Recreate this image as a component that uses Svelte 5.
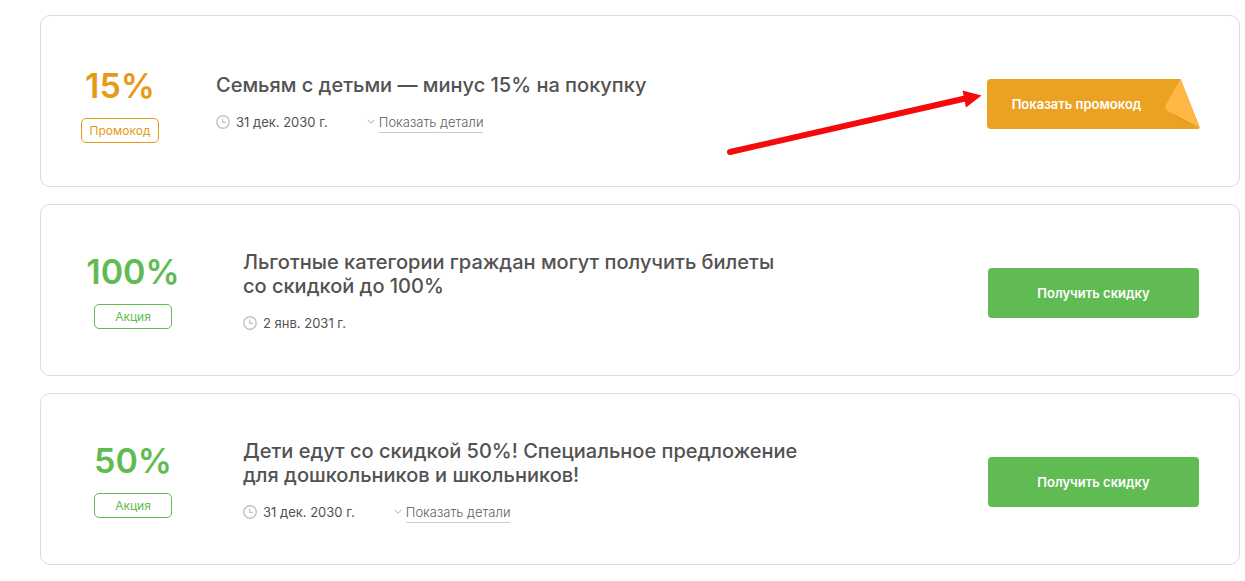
<script lang="ts">
  interface Offer {
    discount: string
    kind: 'promo' | 'action'
    title: string[]
    date: string
    details: boolean
  }

  const offers: Offer[] = [
    {
      discount: '15%',
      kind: 'promo',
      title: ['Семьям с детьми — минус 15% на покупку'],
      date: '31 дек. 2030 г.',
      details: true,
    },
    {
      discount: '100%',
      kind: 'action',
      title: ['Льготные категории граждан могут получить билеты', 'со скидкой до 100%'],
      date: '2 янв. 2031 г.',
      details: false,
    },
    {
      discount: '50%',
      kind: 'action',
      title: ['Дети едут со скидкой 50%! Специальное предложение', 'для дошкольников и школьников!'],
      date: '31 дек. 2030 г.',
      details: true,
    },
  ]
</script>

<main class="offers">
  {#each offers as offer (offer.discount)}
    <article class="card {offer.kind}">
      <div class="badge">
        <span class="discount">{offer.discount}</span>
        <span class="tag">{offer.kind === 'promo' ? 'Промокод' : 'Акция'}</span>
      </div>

      <div class="info">
        <h2>
          {#each offer.title as line}
            <span>{line}</span>
          {/each}
        </h2>
        <div class="meta">
          <span class="date">
            <svg width="14" height="14" viewBox="0 0 14 14" fill="none" stroke="#c2c2c2" aria-hidden="true">
              <circle cx="7" cy="7" r="6.2" stroke-width="1.4" />
              <path d="M6.6 3.6V7.4H10" stroke-width="1.2" />
            </svg>
            {offer.date}
          </span>
          {#if offer.details}
            <button class="details">
              <svg width="8" height="6" viewBox="0 0 8 6" fill="none" stroke="#aaa" aria-hidden="true">
                <path d="M0.6 0.8L4 4.3L7.4 0.8" />
              </svg>
              <span>Показать детали</span>
            </button>
          {/if}
        </div>
      </div>

      {#if offer.kind === 'promo'}
        <button class="cta">
          <svg class="fold" width="36" height="50" viewBox="0 0 36 50" aria-hidden="true">
            <path d="M0 0H16.5L35.6 48Q36 50 34 50H0Z" fill="#eba122" />
            <path d="M1.5 28L17 41L35.5 49L30 42Z" fill="#df9719" />
            <path d="M16.5 0L35.8 49L4 32Q0 29.5 1.8 26Z" fill="#ffb845" />
          </svg>
          <span>Показать промокод</span>
        </button>
        <svg class="arrow" width="258" height="68" viewBox="0 0 258 68" aria-hidden="true">
          <path d="M6 62L241 8.5" stroke="#f40a0a" stroke-width="6" stroke-linecap="round" />
          <path d="M238.5 0.5L257.5 5.5L242 17.5Z" fill="#f40a0a" />
        </svg>
      {:else}
        <button class="cta">Получить скидку</button>
      {/if}
    </article>
  {/each}
</main>

<style>
  :global(body) {
    background: #fff;
  }

  .offers {
    display: flex;
    flex-direction: column;
    gap: 17px;
    padding: 15px 5px 16px 40px;
    font-family: Inter, 'Noto Sans', sans-serif;
    color: #525252;
  }

  .card {
    --accent: #5fbb52;
    --badge-width: 104px;
    position: relative;
    box-sizing: border-box;
    min-height: 172px;
    display: flex;
    align-items: center;
    padding: 24px 40px;
    border: 1px solid #dcdcdc;
    border-radius: 10px;
  }
  .promo {
    --accent: #e69b18;
    --badge-width: 78px;
  }

  .badge {
    flex: 0 0 var(--badge-width);
    display: flex;
    flex-direction: column;
    align-items: center;
    gap: 11px;
    margin-right: 58px;
    color: var(--accent);
  }
  .promo .badge {
    padding-top: 6px;
    margin-right: 57px;
  }

  .discount {
    font-size: 34px;
    line-height: 42px;
    font-weight: 600;
  }

  .tag {
    box-sizing: border-box;
    width: 78px;
    border: 1px solid var(--accent);
    border-radius: 5px;
    font-size: 12px;
    line-height: 23px;
    text-align: center;
  }

  .info {
    flex: 1;
    min-width: 0;
    padding-top: 2px;
  }

  h2 {
    margin: 0 0 16px;
    font-size: 20px;
    line-height: 24px;
    font-weight: 500;
  }
  h2 span {
    display: block;
  }

  .meta {
    display: flex;
    align-items: center;
    gap: 39px;
    height: 18px;
    font-size: 13px;
    line-height: 18px;
  }

  .date {
    display: flex;
    align-items: center;
    gap: 6px;
  }

  button {
    border: none;
    background: none;
    padding: 0;
    font-family: inherit;
    cursor: pointer;
  }

  .details {
    display: flex;
    align-items: center;
    gap: 4px;
    font-size: 13px;
    line-height: 20px;
    font-weight: 300;
    color: #606060;
  }
  .details span {
    border-bottom: 1px solid #ccc;
  }

  .cta {
    flex: 0 0 211px;
    height: 50px;
    margin-top: 6px;
    border-radius: 4px;
    background: var(--accent);
    color: #fff;
    font-size: 13px;
    font-weight: 600;
  }
  .promo .cta {
    flex-basis: 213px;
    display: flex;
    flex-direction: row-reverse;
    align-items: center;
    margin-right: -1px;
    background: none;
  }
  .promo .cta span {
    flex: 1;
    box-sizing: border-box;
    padding-left: 2px;
    line-height: 50px;
    border-radius: 4px 0 0 4px;
    background: #eba122;
  }

  .fold {
    flex-shrink: 0;
  }

  .arrow {
    position: absolute;
    right: 257px;
    top: 74px;
    fill: none;
    pointer-events: none;
  }
</style>
